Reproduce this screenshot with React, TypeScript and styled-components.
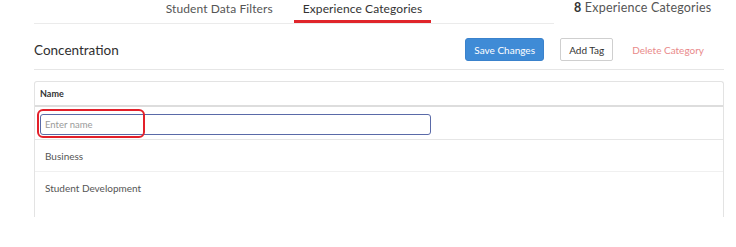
import styled, { createGlobalStyle } from "styled-components"

const GlobalStyle = createGlobalStyle`
    body{
        margin: 0;
        background: #fff;
        font-family: Lato, "Liberation Sans", sans-serif;
        color: #333;
    }
`

const rows = ["Business", "Student Development"]

// COMPONENT //
const App = ()=>{
    return(
        <Page>
            <GlobalStyle />
            <TopRow>
                <TabBar>
                    <Tab>Student Data Filters</Tab>
                    <Tab active>Experience Categories</Tab>
                </TabBar>
                <Count><b>8</b> Experience Categories</Count>
            </TopRow>

            <SectionHead>
                <Title>Concentration</Title>
                <Actions>
                    <SaveButton>Save Changes</SaveButton>
                    <OutlineButton>Add Tag</OutlineButton>
                    <DangerLink>Delete Category</DangerLink>
                </Actions>
            </SectionHead>

            <Table>
                <HeadRow>Name</HeadRow>
                <InputRow>
                    <NameInput type="text" placeholder="Enter name" />
                    <Highlight />
                </InputRow>
                {rows.map((r, i)=>(
                    <Row key={r} last={i === rows.length - 1}>{r}</Row>
                ))}
            </Table>
        </Page>
    )
}

export default App


// STYLESHEET //
const Page = styled.main`
    padding: 0 12px 0 34px;
    height: 247px;
    box-sizing: border-box;
    overflow: hidden;
`

const TopRow = styled.div`
    display: flex;
    align-items: flex-start;
    height: 24px;
`

const TabBar = styled.nav`
    width: 520px;
    height: 24px;
    box-sizing: border-box;
    border-bottom: 1px solid #ebebeb;
    display: flex;
    justify-content: center;
    gap: 12px;
`

const Tab = styled.div<{ active?: boolean }>`
    height: 23px;
    box-sizing: border-box;
    padding: 2px 9px 0;
    font-size: 12px;
    line-height: 14px;
    letter-spacing: 0.1px;
    color: ${({active}) => active ? "#333" : "#555"};
    border-bottom: 3px solid ${({active}) => active ? "#e0252b" : "transparent"};
`

const Count = styled.div`
    margin-left: 20px;
    padding-top: 1px;
    font-size: 12.5px;
    line-height: 14px;
    letter-spacing: 0.2px;
    color: #555;
    b{
        color: #333;
        font-weight: 700;
    }
`

const SectionHead = styled.div`
    display: flex;
    align-items: center;
    justify-content: space-between;
    padding: 14px 0 8px;
    border-bottom: 1px solid #e6e6e6;
`

const Title = styled.h2`
    margin: 0;
    font-size: 13.5px;
    font-weight: 400;
    color: #2f2f2f;
`

const Actions = styled.div`
    display: flex;
    align-items: center;
    gap: 16px;
    padding-right: 17px;
`

const BaseButton = styled.button`
    height: 23px;
    box-sizing: border-box;
    font-family: inherit;
    font-size: 10px;
    cursor: pointer;
`

const SaveButton = styled(BaseButton)`
    width: 79px;
    padding: 0;
    border: 1px solid #3a82cc;
    border-radius: 3px;
    background: #3f8bd6;
    color: #fff;
`

const OutlineButton = styled(BaseButton)`
    width: 53px;
    padding: 0;
    border: 1px solid #cfcfcf;
    border-radius: 2px;
    background: #fff;
    color: #333;
`

const DangerLink = styled(BaseButton)`
    padding: 0 3px;
    border: none;
    background: none;
    color: #e98a8a;
`

const Table = styled.section`
    margin-top: 11px;
    border: 1px solid #e3e3e3;
    border-bottom: none;
    border-radius: 3px 3px 0 0;
`

const HeadRow = styled.div`
    height: 23px;
    padding-left: 5px;
    display: flex;
    align-items: center;
    font-size: 9px;
    font-weight: 700;
    color: #333;
    border-bottom: 2px solid #dddddd;
`

const InputRow = styled.div`
    position: relative;
    height: 33px;
    box-sizing: border-box;
    padding: 5px 0 0 5px;
    border-bottom: 1px solid #e6e6e6;
`

const NameInput = styled.input`
    width: 391px;
    height: 21px;
    box-sizing: border-box;
    padding: 0 4px;
    border: 1px solid #5a6aa8;
    border-radius: 3px;
    outline: none;
    font-family: inherit;
    font-size: 9.5px;
    color: #333;
    &::placeholder{
        color: #9a9a9a;
    }
`

const Highlight = styled.span`
    position: absolute;
    left: 2px;
    top: 2px;
    width: 108px;
    height: 29px;
    box-sizing: border-box;
    border: 2px solid #e3202a;
    border-radius: 6px;
    pointer-events: none;
`

const Row = styled.div<{ last?: boolean }>`
    height: ${({last}) => last ? "45px" : "32px"};
    box-sizing: border-box;
    padding: ${({last}) => last ? "10px" : "0"} 0 0 10px;
    display: flex;
    align-items: ${({last}) => last ? "flex-start" : "center"};
    font-size: 10px;
    color: #555;
    border-bottom: ${({last}) => last ? "none" : "1px solid #f0f0f0"};
`
